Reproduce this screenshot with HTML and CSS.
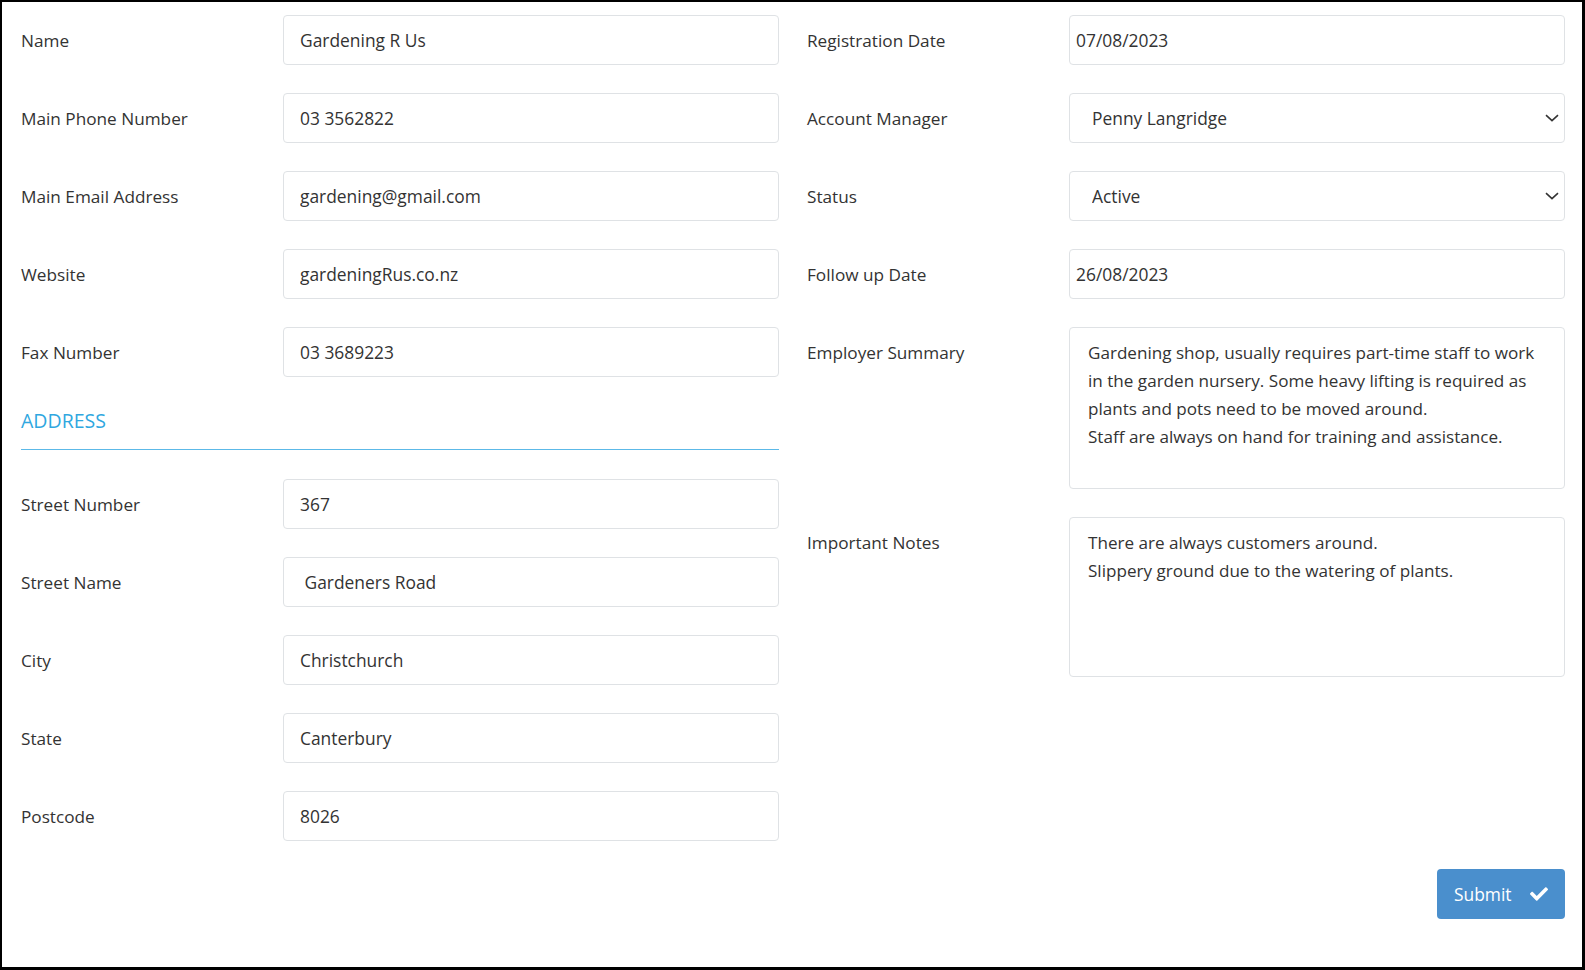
FILE: index.html
```html
<!DOCTYPE html>
<html lang="en">

<head>
    <meta charset="UTF-8">
    <meta name="viewport" content="width=device-width, initial-scale=1.0">
    <title>Employer Details</title>
    <link rel="stylesheet" href="styles.css">
</head>

<body>
    <div class="page">
        <form class="form-grid">
            <!-- Left column: contact + address -->
            <div class="form-col">
                <div class="form-row">
                    <label for="name">Name</label>
                    <input type="text" id="name" class="field" value="Gardening R Us">
                </div>
                <div class="form-row">
                    <label for="phone">Main Phone Number</label>
                    <input type="text" id="phone" class="field" value="03 3562822">
                </div>
                <div class="form-row">
                    <label for="email">Main Email Address</label>
                    <input type="text" id="email" class="field" value="gardening@gmail.com">
                </div>
                <div class="form-row">
                    <label for="website">Website</label>
                    <input type="text" id="website" class="field" value="gardeningRus.co.nz">
                </div>
                <div class="form-row">
                    <label for="fax">Fax Number</label>
                    <input type="text" id="fax" class="field" value="03 3689223">
                </div>

                <h4 class="section-title">ADDRESS</h4>

                <div class="form-row">
                    <label for="streetNumber">Street Number</label>
                    <input type="text" id="streetNumber" class="field" value="367">
                </div>
                <div class="form-row">
                    <label for="streetName">Street Name</label>
                    <input type="text" id="streetName" class="field" value=" Gardeners Road">
                </div>
                <div class="form-row">
                    <label for="city">City</label>
                    <input type="text" id="city" class="field" value="Christchurch">
                </div>
                <div class="form-row">
                    <label for="state">State</label>
                    <input type="text" id="state" class="field" value="Canterbury">
                </div>
                <div class="form-row">
                    <label for="postcode">Postcode</label>
                    <input type="text" id="postcode" class="field" value="8026">
                </div>
            </div>

            <!-- Right column: account info -->
            <div class="form-col">
                <div class="form-row">
                    <label for="regDate">Registration Date</label>
                    <input type="text" id="regDate" class="field field-date" value="07/08/2023">
                </div>
                <div class="form-row">
                    <label for="manager">Account Manager</label>
                    <div class="select-wrap">
                        <select id="manager" class="field field-select">
                            <option>Penny Langridge</option>
                        </select>
                        <svg class="chevron" width="14" height="8" viewBox="0 0 14 8">
                            <path d="M1 1.2L7 6.6L13 1.2" fill="none" stroke="#333" stroke-width="1.6" />
                        </svg>
                    </div>
                </div>
                <div class="form-row">
                    <label for="status">Status</label>
                    <div class="select-wrap">
                        <select id="status" class="field field-select">
                            <option>Active</option>
                        </select>
                        <svg class="chevron" width="14" height="8" viewBox="0 0 14 8">
                            <path d="M1 1.2L7 6.6L13 1.2" fill="none" stroke="#333" stroke-width="1.6" />
                        </svg>
                    </div>
                </div>
                <div class="form-row">
                    <label for="followUp">Follow up Date</label>
                    <input type="text" id="followUp" class="field field-date" value="26/08/2023">
                </div>
                <div class="form-row">
                    <label for="summary">Employer Summary</label>
                    <textarea id="summary" class="field field-area summary">Gardening shop, usually requires part-time staff to work
in the garden nursery. Some heavy lifting is required as
plants and pots need to be moved around.
Staff are always on hand for training and assistance.</textarea>
                </div>
                <div class="form-row">
                    <label for="notes">Important Notes</label>
                    <textarea id="notes" class="field field-area notes">There are always customers around.
Slippery ground due to the watering of plants.</textarea>
                </div>
            </div>
        </form>

        <div class="button-container">
            <button type="button" class="button">
                Submit
                <svg class="check" width="18" height="18" viewBox="0 0 512 512">
                    <path fill="#fff" d="M173.9 439.4l-166.4-166.4c-10-10-10-26.2 0-36.2l36.2-36.2c10-10 26.2-10 36.2 0L192 312.7 432.1 72.6c10-10 26.2-10 36.2 0l36.2 36.2c10 10 10 26.2 0 36.2l-294.4 294.4c-10 10-26.2 10-36.2 0z" />
                </svg>
            </button>
        </div>
    </div>
</body>

</html>
```

FILE: styles.css
```css
body {
    margin: 0;
    padding: 0;
    background-color: #ffffff;
    font-family: "Open Sans", "Noto Sans", sans-serif;
    color: #333333;
}

.page {
    box-sizing: border-box;
    width: 1585px;
    height: 970px;
    padding: 13px 17px 0 19px;
    border: solid #000000;
    border-width: 2px 3px 3px 2px;
    background-color: #ffffff;
}

.form-grid {
    display: grid;
    grid-template-columns: 758px 758px;
    column-gap: 28px;
    align-items: start;
}

.form-col {
    display: flex;
    flex-direction: column;
    gap: 28px;
}

.form-row {
    display: grid;
    grid-template-columns: 262px 1fr;
    align-items: start;
}

.form-row label {
    height: 50px;
    padding-top: 2px;
    box-sizing: border-box;
    font-size: 17.2px;
    line-height: 48px;
    color: #333333;
}

.field {
    box-sizing: border-box;
    width: 100%;
    height: 50px;
    margin: 0;
    padding: 0 16px;
    font-family: inherit;
    font-size: 17.4px;
    color: #333333;
    background-color: #ffffff;
    border: 1px solid #dfe2e5;
    border-radius: 4px;
    outline: none;
}

.field-date {
    padding: 0 6px;
}

.select-wrap {
    position: relative;
}

.field-select {
    appearance: none;
    -webkit-appearance: none;
    padding: 0 22px;
}

.chevron {
    position: absolute;
    right: 6px;
    top: 21px;
    pointer-events: none;
}

.field-area {
    display: block;
    padding: 11px 8px 11px 18px;
    font-size: 17.1px;
    line-height: 28px;
    resize: none;
    overflow: hidden;
}

.summary {
    height: 162px;
}

.notes {
    height: 160px;
}

.section-title {
    margin: 0 0 1px;
    padding-bottom: 12px;
    font-size: 19.5px;
    font-weight: 500;
    line-height: 32px;
    color: #2fa7e0;
    border-bottom: 1px solid #5cb9e8;
}

.button-container {
    display: flex;
    justify-content: flex-end;
    margin-top: 28px;
}

.button {
    display: inline-flex;
    align-items: center;
    gap: 18px;
    box-sizing: border-box;
    width: 128px;
    height: 50px;
    padding: 0 17px;
    font-family: inherit;
    font-size: 17.4px;
    color: #ffffff;
    background-color: #4a8fcd;
    border: none;
    border-radius: 4px;
}
```
